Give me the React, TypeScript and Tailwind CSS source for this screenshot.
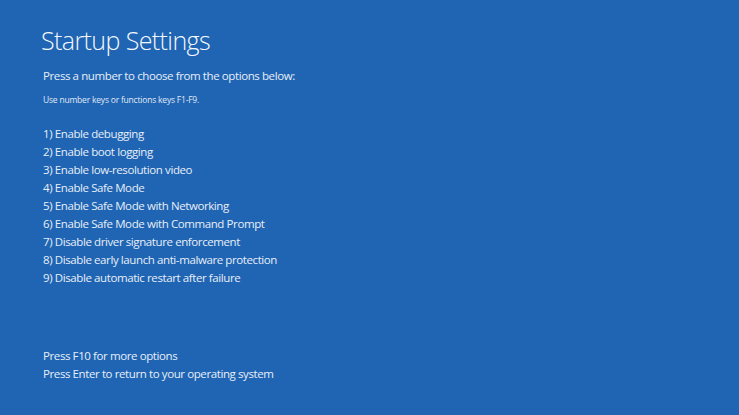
import React from "react";

const items = [
  "1) Enable debugging",
  "2) Enable boot logging",
  "3) Enable low-resolution video",
  "4) Enable Safe Mode",
  "5) Enable Safe Mode with Networking",
  "6) Enable Safe Mode with Command Prompt",
  "7) Disable driver signature enforcement",
  "8) Disable early launch anti-malware protection",
  "9) Disable automatic restart after failure",
];

export default function App() {
  return (
    <div
      className="w-[739px] h-[415px] bg-[#1f65b3] text-white flex flex-col overflow-hidden"
      style={{ fontFamily: '"Open Sans", "Noto Sans", sans-serif' }}
    >
      <div className="pl-[41px] pt-[24px]">
        <h1 className="text-[25px] leading-[32px] font-light tracking-[-0.6px] text-[#f4f8fc]">Startup Settings</h1>
      </div>
      <div className="pl-[43px] pt-[11px] flex flex-col">
        <p className="text-[11.5px] leading-[18px] tracking-[-0.4px] text-[#e8eef7]">Press a number to choose from the options below:</p>
        <p className="text-[8.5px] leading-[12px] tracking-[-0.2px] mt-[9px] text-[#e0e8f3]">Use number keys or functions keys F1-F9.</p>
        <ul className="mt-[19px] flex flex-col">
          {items.map((t) => (
            <li key={t} className="text-[11.5px] leading-[18px] tracking-[-0.4px] text-[#e8eef7]">{t}</li>
          ))}
        </ul>
      </div>
      <div className="pl-[43px] mt-auto pb-[32px] flex flex-col">
        <p className="text-[11.5px] leading-[18px] tracking-[-0.4px] text-[#e8eef7]">Press F10 for more options</p>
        <p className="text-[11.5px] leading-[18px] tracking-[-0.4px] text-[#e8eef7]">Press Enter to return to your operating system</p>
      </div>
    </div>
  );
}
